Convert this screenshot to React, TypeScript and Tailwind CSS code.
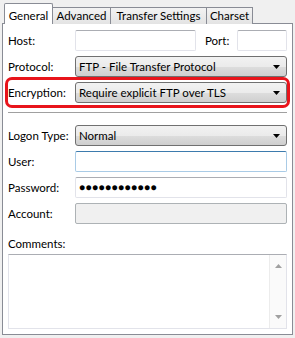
import React from "react";

const font = { fontFamily: 'Lato, "Liberation Sans", Arial, sans-serif' };

function Arrow() {
  return (
    <svg width="7" height="4" viewBox="0 0 7 4" className="absolute right-[6px] top-1/2 -translate-y-1/2">
      <path d="M0 0H7L3.5 4Z" fill="#000" />
    </svg>
  );
}

function Select({ value }: { value: string }) {
  return (
    <div className="relative flex-1 h-[21px] rounded-[3px] border border-[#707070] bg-[linear-gradient(#f2f2f2_0%,#ebebeb_50%,#dddddd_51%,#cfcfcf_100%)] flex items-center pl-[3px] text-[11.5px] text-black whitespace-nowrap">
      {value}
      <Arrow />
    </div>
  );
}

function Input({ className = "", children, focused = false, disabled = false }: { className?: string; children?: React.ReactNode; focused?: boolean; disabled?: boolean }) {
  const border = focused
    ? "border border-[#a9cbe6] border-t-[#3d7bad]"
    : disabled
    ? "border border-[#adb2b5]"
    : "border border-[#e2e3ea] border-t-[#abadb3]";
  return (
    <div className={`h-[21px] rounded-[2px] ${border} ${disabled ? "bg-[#f0f0f0]" : "bg-white"} flex items-center pl-[3px] ${className}`}>
      {children}
    </div>
  );
}

function Row({ label, children, className = "" }: { label: string; children: React.ReactNode; className?: string }) {
  return (
    <div className={`flex items-center ${className}`}>
      <div className="w-[67px] text-[11.5px] text-black whitespace-nowrap">{label}</div>
      {children}
    </div>
  );
}

const tabCls =
  "h-[17px] border border-b-0 border-l-0 border-[#898c95] bg-[linear-gradient(#f3f3f3,#e3e3e3)] text-[11.5px] flex items-center justify-center leading-none whitespace-nowrap";

export default function App() {
  return (
    <div className="w-[295px] h-[338px] bg-[#f0f0f0] relative overflow-hidden" style={font}>
      {/* tabs */}
      <div className="flex items-end pl-[4px] pt-[3px] h-[24px] relative z-10">
        <div className="h-[21px] w-[49px] bg-white border border-b-0 border-[#898c95] rounded-t-[2px] text-[11.5px] flex items-start justify-center pt-[3px] whitespace-nowrap">General</div>
        <div className={`${tabCls} w-[58px]`}>Advanced</div>
        <div className={`${tabCls} w-[96px]`}>Transfer Settings</div>
        <div className={`${tabCls} w-[46px]`}>Charset</div>
      </div>
      {/* panel */}
      <div className="absolute left-[2px] top-[23px] w-[291px] h-[312px] bg-white border border-[#898c95] flex flex-col pl-[5px] pr-[5px]">
        <Row label="Host:" className="mt-[6px]">
          <Input className="w-[121px]" />
          <div className="ml-[9px] w-[32px] text-[11.5px]">Port:</div>
          <Input className="w-[50px]" />
        </Row>
        <Row label="Protocol:" className="mt-[5px]">
          <Select value="FTP - File Transfer Protocol" />
        </Row>
        <div className="-ml-[3px] -mr-[3px] h-[31px] border-[3px] border-[#e8141b] rounded-[7px] flex items-center">
          <div className="w-[67px] text-[11.5px] whitespace-nowrap">Encryption:</div>
          <Select value="Require explicit FTP over TLS" />
        </div>
        <div className="mt-[4px] h-px bg-[#a0a0a0] border-b border-white box-content" />
        <Row label="Logon Type:" className="mt-[11px]">
          <Select value="Normal" />
        </Row>
        <Row label="User:" className="mt-[5px]">
          <Input className="flex-1" focused />
        </Row>
        <Row label="Password:" className="mt-[5px]">
          <Input className="flex-1">
            <span className="text-[10px] tracking-[0.5px]">●●●●●●●●●●●●</span>
          </Input>
        </Row>
        <Row label="Account:" className="mt-[5px]">
          <Input className="flex-1" disabled />
        </Row>
        <div className="mt-[12px] text-[11.5px] leading-[15px]">Comments:</div>
        <div className="mt-[3px] h-[75px] border border-[#e2e3ea] border-t-[#abadb3] flex">
          <div className="flex-1" />
          <div className="w-[17px] bg-[#fafafa] border-l border-[#ececec] flex flex-col items-center justify-between py-[9px]">
            <svg width="7" height="4" viewBox="0 0 7 4"><path d="M0 4H7L3.5 0Z" fill="#a0a0a0" /></svg>
            <svg width="7" height="4" viewBox="0 0 7 4"><path d="M0 0H7L3.5 4Z" fill="#a0a0a0" /></svg>
          </div>
        </div>
      </div>
    </div>
  );
}
